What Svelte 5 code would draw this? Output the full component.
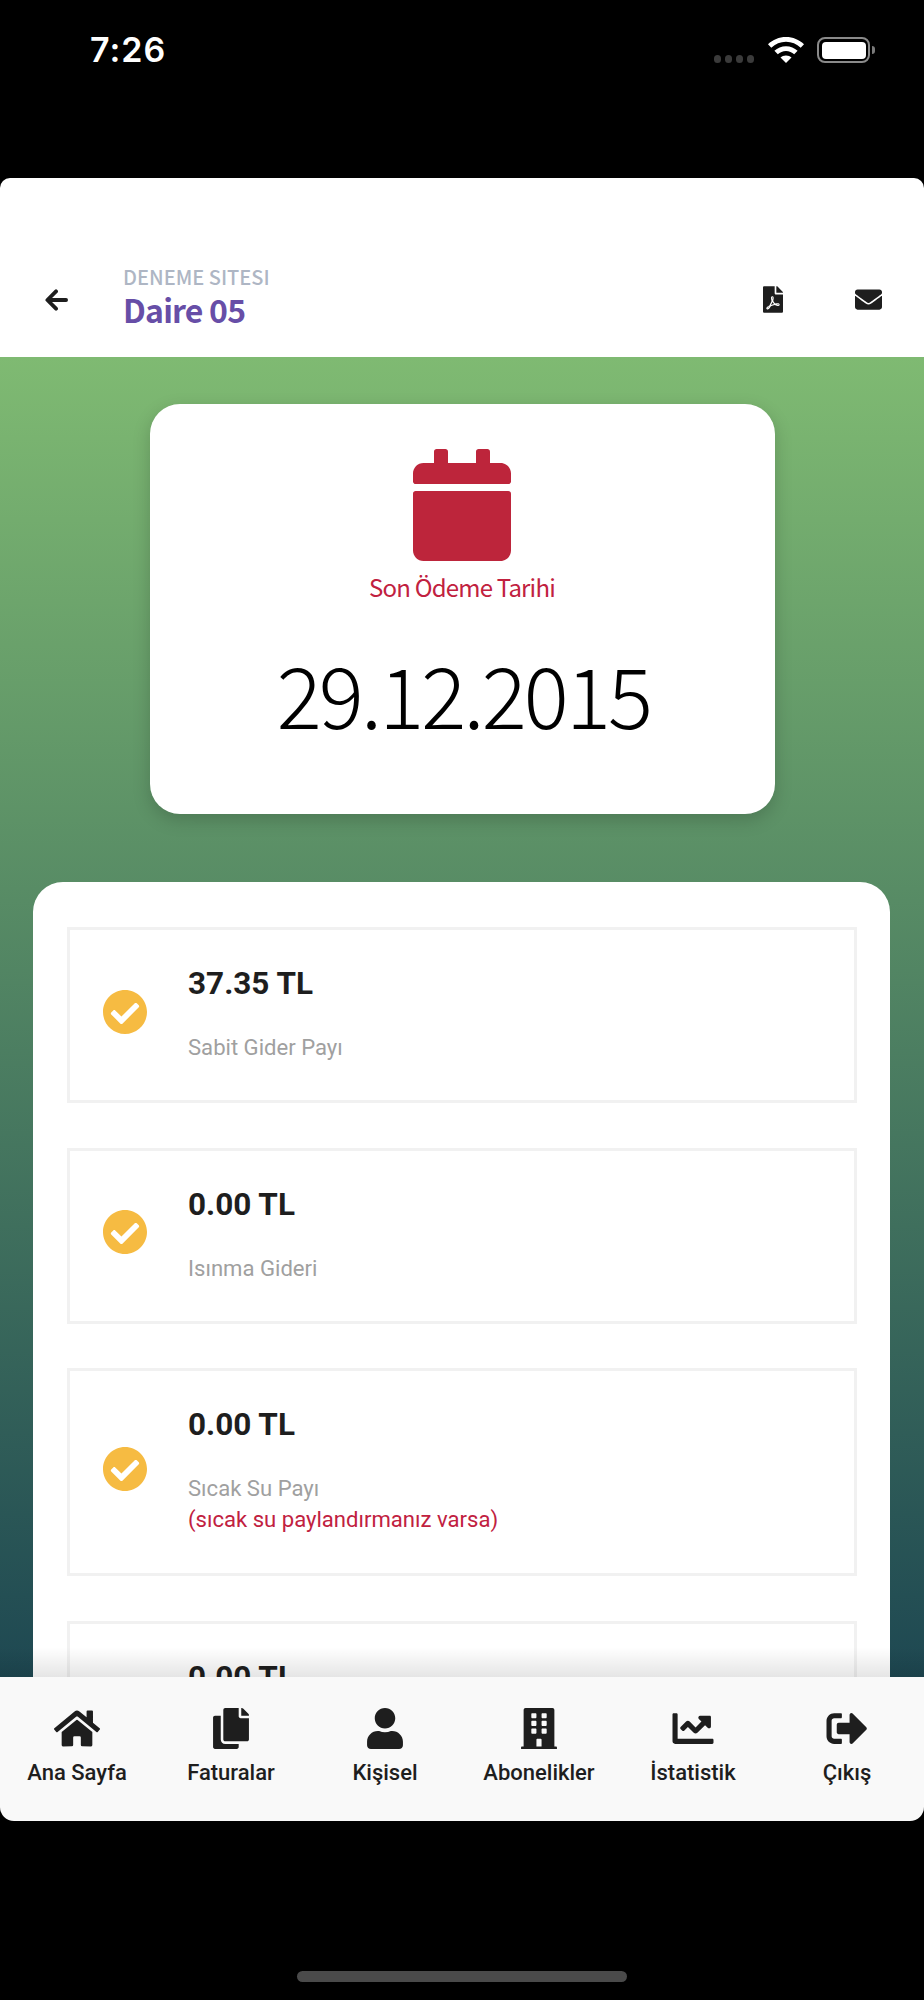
<script>
  const items = [
    { amount: '37.35 TL', label: 'Sabit Gider Payı' },
    { amount: '0.00 TL', label: 'Isınma Gideri' },
    { amount: '0.00 TL', label: 'Sıcak Su Payı', note: '(sıcak su paylandırmanız varsa)' },
    { amount: '0.00 TL' }
  ];
  const tabs = [
    { label: 'Ana Sayfa', vb: '0 0 576 512', d: 'M280.37 148.26L96 300.11V464a16 16 0 0 0 16 16l112.06-.29a16 16 0 0 0 15.92-16V368a16 16 0 0 1 16-16h64a16 16 0 0 1 16 16v95.64a16 16 0 0 0 16 16.05L464 480a16 16 0 0 0 16-16V300L295.67 148.26a12.19 12.19 0 0 0-15.3 0zM571.6 251.47L488 182.56V44.05a12 12 0 0 0-12-12h-56a12 12 0 0 0-12 12v72.61L318.47 43a48 48 0 0 0-61 0L4.34 251.47a12 12 0 0 0-1.6 16.9l25.5 31A12 12 0 0 0 45.15 301l235.22-193.74a12.19 12.19 0 0 1 15.3 0L530.9 301a12 12 0 0 0 16.9-1.6l25.5-31a12 12 0 0 0-1.7-16.93z' },
    { label: 'Faturalar', vb: '0 0 448 512', d: 'M320 448v40c0 13.255-10.745 24-24 24H24c-13.255 0-24-10.745-24-24V120c0-13.255 10.745-24 24-24h72v296c0 30.879 25.121 56 56 56h168zm0-344V0H152c-13.255 0-24 10.745-24 24v368c0 13.255 10.745 24 24 24h272c13.255 0 24-10.745 24-24V128H344c-13.2 0-24-10.8-24-24zm120.971-31.029L375.029 7.029A24 24 0 0 0 358.059 0H352v96h96v-6.059a24 24 0 0 0-7.029-16.97z' },
    { label: 'Kişisel', vb: '0 0 448 512', d: 'M224 256c70.7 0 128-57.3 128-128S294.7 0 224 0 96 57.3 96 128s57.3 128 128 128zm89.6 32h-16.7c-22.2 10.2-46.9 16-72.9 16s-50.6-5.8-72.9-16h-16.7C60.2 288 0 348.2 0 422.4V464c0 26.5 21.5 48 48 48h352c26.5 0 48-21.5 48-48v-41.6c0-74.2-60.2-134.4-134.4-134.4z' },
    { label: 'Abonelikler', vb: '0 0 448 512', d: 'M436 480h-20V24c0-13.255-10.745-24-24-24H56C42.745 0 32 10.745 32 24v456H12c-6.627 0-12 5.373-12 12v20h448v-20c0-6.627-5.373-12-12-12zM128 76c0-6.627 5.373-12 12-12h40c6.627 0 12 5.373 12 12v40c0 6.627-5.373 12-12 12h-40c-6.627 0-12-5.373-12-12V76zm0 96c0-6.627 5.373-12 12-12h40c6.627 0 12 5.373 12 12v40c0 6.627-5.373 12-12 12h-40c-6.627 0-12-5.373-12-12v-40zm52 148h-40c-6.627 0-12-5.373-12-12v-40c0-6.627 5.373-12 12-12h40c6.627 0 12 5.373 12 12v40c0 6.627-5.373 12-12 12zm76 160h-64v-84c0-6.627 5.373-12 12-12h40c6.627 0 12 5.373 12 12v84zm64-172c0 6.627-5.373 12-12 12h-40c-6.627 0-12-5.373-12-12v-40c0-6.627 5.373-12 12-12h40c6.627 0 12 5.373 12 12v40zm0-96c0 6.627-5.373 12-12 12h-40c-6.627 0-12-5.373-12-12v-40c0-6.627 5.373-12 12-12h40c6.627 0 12 5.373 12 12v40zm0-96c0 6.627-5.373 12-12 12h-40c-6.627 0-12-5.373-12-12V76c0-6.627 5.373-12 12-12h40c6.627 0 12 5.373 12 12v40z' },
    { label: 'İstatistik', vb: '0 0 512 512', d: 'M496 384H64V80c0-8.84-7.16-16-16-16H16C7.16 64 0 71.16 0 80v336c0 17.67 14.33 32 32 32h464c8.84 0 16-7.16 16-16v-32c0-8.84-7.16-16-16-16zM464 96H345.94c-21.38 0-32.09 25.85-16.97 40.97l32.4 32.4L288 242.75l-73.37-73.37c-12.5-12.5-32.76-12.5-45.25 0l-68.69 68.69c-6.25 6.25-6.25 16.38 0 22.63l22.62 22.62c6.25 6.25 16.38 6.25 22.63 0L192 237.25l73.37 73.37c12.5 12.5 32.76 12.5 45.25 0l96-96 32.4 32.4c15.12 15.12 40.97 4.41 40.97-16.97V112c.01-8.84-7.15-16-15.99-16z' },
    { label: 'Çıkış', vb: '0 0 512 512', d: 'M497 273L329 441c-15 15-41 4.5-41-17v-96H152c-13.3 0-24-10.7-24-24v-96c0-13.3 10.7-24 24-24h136V88c0-21.4 25.9-32 41-17l168 168c9.3 9.4 9.3 24.6 0 34zM192 436v-40c0-6.6-5.4-12-12-12H96c-17.7 0-32-14.3-32-32V160c0-17.7 14.3-32 32-32h84c6.6 0 12-5.4 12-12V76c0-6.6-5.4-12-12-12H96c-53 0-96 43-96 96v192c0 53 43 96 96 96h84c6.6 0 12-5.4 12-12z' }
  ];
  const check = 'M504 256c0 136.967-111.033 248-248 248S8 392.967 8 256 119.033 8 256 8s248 111.033 248 248zM227.314 387.314l184-184c6.248-6.248 6.248-16.379 0-22.627l-22.627-22.627c-6.248-6.249-16.379-6.249-22.628 0L216 308.118l-70.059-70.059c-6.248-6.248-16.379-6.248-22.628 0l-22.627 22.627c-6.248 6.248-6.248 16.379 0 22.627l104 104c6.249 6.249 16.379 6.249 22.628.001z';
</script>

<div class="screen">
  <div class="status">
    <span class="time">7:26</span>
    <div class="status-icons">
      <div class="dots"><i></i><i></i><i></i><i></i></div>
      <svg class="wifi" viewBox="0 0 36 26" aria-hidden="true">
        <path d="M18 0C11 0 4.900 2.700 0 7.200l3.300 3.500C7.300 7 12.400 4.800 18 4.800s10.700 2.200 14.700 5.900L36 7.200C31.100 2.700 25 0 18 0z" fill="#fff"/>
        <path d="M18 9.200c-4.500 0-8.500 1.700-11.600 4.600l3.400 3.500c2.200-2 5-3.300 8.200-3.300s6 1.300 8.200 3.300l3.400-3.500C26.500 10.900 22.500 9.200 18 9.200z" fill="#fff"/>
        <path d="M18 18.400c-2.200 0-4.200.9-5.500 2.200L18 26l5.500-5.400c-1.300-1.300-3.300-2.200-5.500-2.200z" fill="#fff"/>
      </svg>
      <div class="battery"><div class="cell"></div></div>
      <div class="nub"></div>
    </div>
  </div>

  <header class="header">
    <svg class="back" viewBox="0 0 24 22" aria-hidden="true"><path d="M22 11H3M11.500 2 2.500 11l9 9" fill="none" stroke="#1e1e1e" stroke-width="4" stroke-linecap="round" stroke-linejoin="round"/></svg>
    <div class="titles">
      <div class="site">DENEME SITESI</div>
      <div class="flat">Daire 05</div>
    </div>
    <svg class="pdf" viewBox="0 0 384 512" aria-hidden="true"><path fill="#1e1e1e" d="M181.900 256.100c-5-16-4.900-46.900-2-46.900 8.400 0 7.600 36.900 2 46.900zm-1.700 47.200c-7.700 20.200-17.300 43.300-28.400 62.700 18.300-7 39-17.200 62.900-21.900-12.700-9.600-24.900-23.400-34.500-40.800zM86.100 428.100c0 .8 13.200-5.400 34.900-40.200-6.700 6.300-29.100 24.500-34.900 40.200zM248 160h136v328c0 13.300-10.700 24-24 24H24c-13.300 0-24-10.700-24-24V24C0 10.700 10.700 0 24 0h200v136c0 13.200 10.800 24 24 24zm-8 171.800c-20-12.200-33.300-29-42.700-53.800 4.500-18.500 11.600-46.600 6.200-64.200-4.700-29.400-42.400-26.500-47.800-6.800-5 18.300-.4 44.100 8.100 77-11.600 27.600-28.700 64.600-40.800 85.800-.1 0-.1.1-.2.1-27.100 13.900-73.600 44.500-54.500 68 5.600 6.900 16 10 21.500 10 17.900 0 35.700-18 61.100-61.800 25.800-8.500 54.100-19.100 79-23.200 21.700 11.800 47.100 19.500 64 19.500 29.200 0 31.200-32 19.700-43.400-13.900-13.600-54.300-9.700-73.600-7.200zM377 105L279 7c-4.500-4.500-10.600-7-17-7h-6v128h128v-6.100c0-6.300-2.500-12.400-7-16.900zm-74.100 255.300c4.100-2.700-2.500-11.900-42.800-9 37.100 15.800 42.800 9 42.800 9z"/></svg>
    <svg class="mail" viewBox="0 0 512 512" aria-hidden="true"><path fill="#1e1e1e" d="M502.300 190.800c3.900-3.100 9.700-.2 9.700 4.700V400c0 26.500-21.500 48-48 48H48c-26.500 0-48-21.500-48-48V195.600c0-5 5.700-7.800 9.700-4.700 22.400 17.400 52.100 39.500 154.100 113.600 21.100 15.400 56.700 47.800 92.200 47.600 35.700.3 72-32.800 92.300-47.600 102-74.100 131.600-96.300 154-113.700zM256 320c23.200.4 56.600-29.200 73.400-41.400 132.700-96.300 142.800-104.700 173.400-128.700 5.800-4.500 9.200-11.500 9.200-18.900v-19c0-26.500-21.500-48-48-48H48C21.500 64 0 85.500 0 112v19c0 7.400 3.400 14.300 9.200 18.900 30.600 23.900 40.700 32.400 173.400 128.700 16.800 12.200 50.200 41.800 73.400 41.400z"/></svg>
  </header>

  <main class="main">
    <section class="due">
      <svg class="cal" viewBox="0 0 448 512" aria-hidden="true"><path fill="#bd253b" d="M12 192h424c6.600 0 12 5.400 12 12v260c0 26.500-21.500 48-48 48H48c-26.500 0-48-21.500-48-48V204c0-6.600 5.400-12 12-12zm436-44v-36c0-26.500-21.500-48-48-48h-48V12c0-6.600-5.400-12-12-12h-40c-6.600 0-12 5.400-12 12v52H160V12c0-6.600-5.400-12-12-12h-40c-6.600 0-12 5.400-12 12v52H48C21.500 64 0 85.500 0 112v36c0 6.600 5.400 12 12 12h424c6.600 0 12-5.400 12-12z"/></svg>
      <div class="due-label">Son Ödeme Tarihi</div>
      <div class="due-date">29.12.2015</div>
    </section>

    <section class="list">
      {#each items as it}
        <div class="item">
          <svg class="tick" viewBox="8 8 496 496" aria-hidden="true"><path fill="#f6bb42" d={check}/></svg>
          <div class="item-text">
            <div class="amount">{it.amount}</div>
            {#if it.label}<div class="label">{it.label}</div>{/if}
            {#if it.note}<div class="note">{it.note}</div>{/if}
          </div>
        </div>
      {/each}
    </section>
    <div class="fade"></div>
  </main>

  <nav class="tabs">
    {#each tabs as t}
      <div class="tab">
        <svg viewBox={t.vb} aria-hidden="true"><path fill="#1e1e1e" d={t.d}/></svg>
        <span>{t.label}</span>
      </div>
    {/each}
  </nav>

  <div class="home-area"><div class="home-bar"></div></div>
</div>

<style>
  :global(body) { margin: 0; background: #000; }
  .screen { width: 924px; height: 2000px; display: flex; flex-direction: column; background: #000; overflow: hidden; }

  .status { height: 178px; flex: none; display: flex; align-items: flex-start; justify-content: space-between; box-sizing: border-box; padding: 28px 49px 0 90px; }
  .time { color: #fff; font: 600 34px/44px Inter, "Liberation Sans", sans-serif; letter-spacing: 1px; }
  .status-icons { display: flex; align-items: flex-start; margin-top: 9px; }
  .dots { display: flex; gap: 3.500px; margin-top: 18px; margin-right: 14px; }
  .dots i { width: 7.500px; height: 7.500px; border-radius: 50%; background: #3b3b3b; }
  .wifi { width: 36px; height: 26px; margin-right: 13px; }
  .battery { width: 53px; height: 26px; box-sizing: border-box; border: 2px solid #8a8a8a; border-radius: 8px; padding: 2.500px; }
  .cell { height: 100%; background: #fff; border-radius: 4px; }
  .nub { width: 3px; height: 8px; margin: 9px 0 0 2px; background: #7a7a7a; border-radius: 0 3px 3px 0; }

  .header { height: 179px; flex: none; box-sizing: border-box; background: #fff; border-radius: 10px 10px 0 0; display: flex; align-items: flex-start; padding: 86px 42px 0 45px; }
  .back { width: 23px; height: 22px; margin-top: 25px; }
  .titles { margin-left: 55px; flex: 1; font-family: "Noto Sans CJK JP", "Noto Sans", sans-serif; }
  .site { font-size: 20px; line-height: 26px; font-weight: 500; color: #aeb6c4; }
  .flat { font-size: 32px; line-height: 38px; font-weight: 700; color: #674ea7; letter-spacing: -0.8px; }
  .pdf { width: 20px; height: 27px; margin-top: 22px; margin-right: 72px; }
  .mail { width: 27px; height: 27px; margin-top: 22px; }

  .main { height: 1320px; flex: none; position: relative; overflow: hidden; box-sizing: border-box; padding-top: 47px; background: linear-gradient(180deg, #7fba72 0%, #1e4852 100%); }
  .due { width: 625px; height: 410px; box-sizing: border-box; margin: 0 auto; background: #fff; border-radius: 30px; box-shadow: 0 6px 18px rgba(0,0,0,.18); display: flex; flex-direction: column; align-items: center; padding-top: 45px; }
  .cal { width: 98px; height: 112px; display: block; }
  .due-label { font: 400 24px/30px "Noto Sans CJK JP", "Noto Sans", sans-serif; color: #c1213f; margin-top: 11px; letter-spacing: -0.8px; }
  .due-date { font: 300 84px/100px "Noto Sans CJK JP", "Noto Sans", sans-serif; color: #000; margin: 41px 0 0 3px; letter-spacing: -2.800px; }

  .list { margin: 68px 34px 0 33px; background: #fff; border-radius: 30px; padding: 45px 33px 60px 34px; display: flex; flex-direction: column; gap: 44.700px; }
  .item { border: 3px solid #f1f1f1; display: flex; align-items: center; padding: 0 0 0 33px; min-height: 170px; }
  .tick { width: 44px; height: 44px; flex: none; margin-right: 41px; margin-top: -7px; }
  .item-text { padding: 36px 0 38px; font-family: Roboto, sans-serif; align-self: flex-start; }
  .amount { font-size: 31.500px; line-height: 36px; font-weight: 700; color: #1e1e1e; }
  .label { font-size: 22.100px; line-height: 30px; color: #a0a0a0; margin-top: 30px; }
  .note { font-size: 22.100px; line-height: 32px; color: #c1213f; }
  .fade { position: absolute; left: 0; right: 0; bottom: 0; height: 30px; pointer-events: none; background: linear-gradient(180deg, rgba(0,0,0,0), rgba(0,0,0,.1)); }

  .tabs { height: 144px; flex: none; background: #f9f9f9; border-radius: 0 0 14px 14px; display: grid; grid-template-columns: repeat(6, 1fr); box-sizing: border-box; padding-top: 31px; }
  .tab { display: flex; flex-direction: column; align-items: center; font: 500 22px/30px Roboto, sans-serif; color: #1e1e1e; }
  .tab svg { height: 41px; width: 46px; display: block; margin-bottom: 9px; }

  .home-area { flex: 1; display: flex; justify-content: center; align-items: flex-end; padding-bottom: 18px; }
  .home-bar { width: 330px; height: 11px; border-radius: 6px; background: #4a4a4a; }
</style>
